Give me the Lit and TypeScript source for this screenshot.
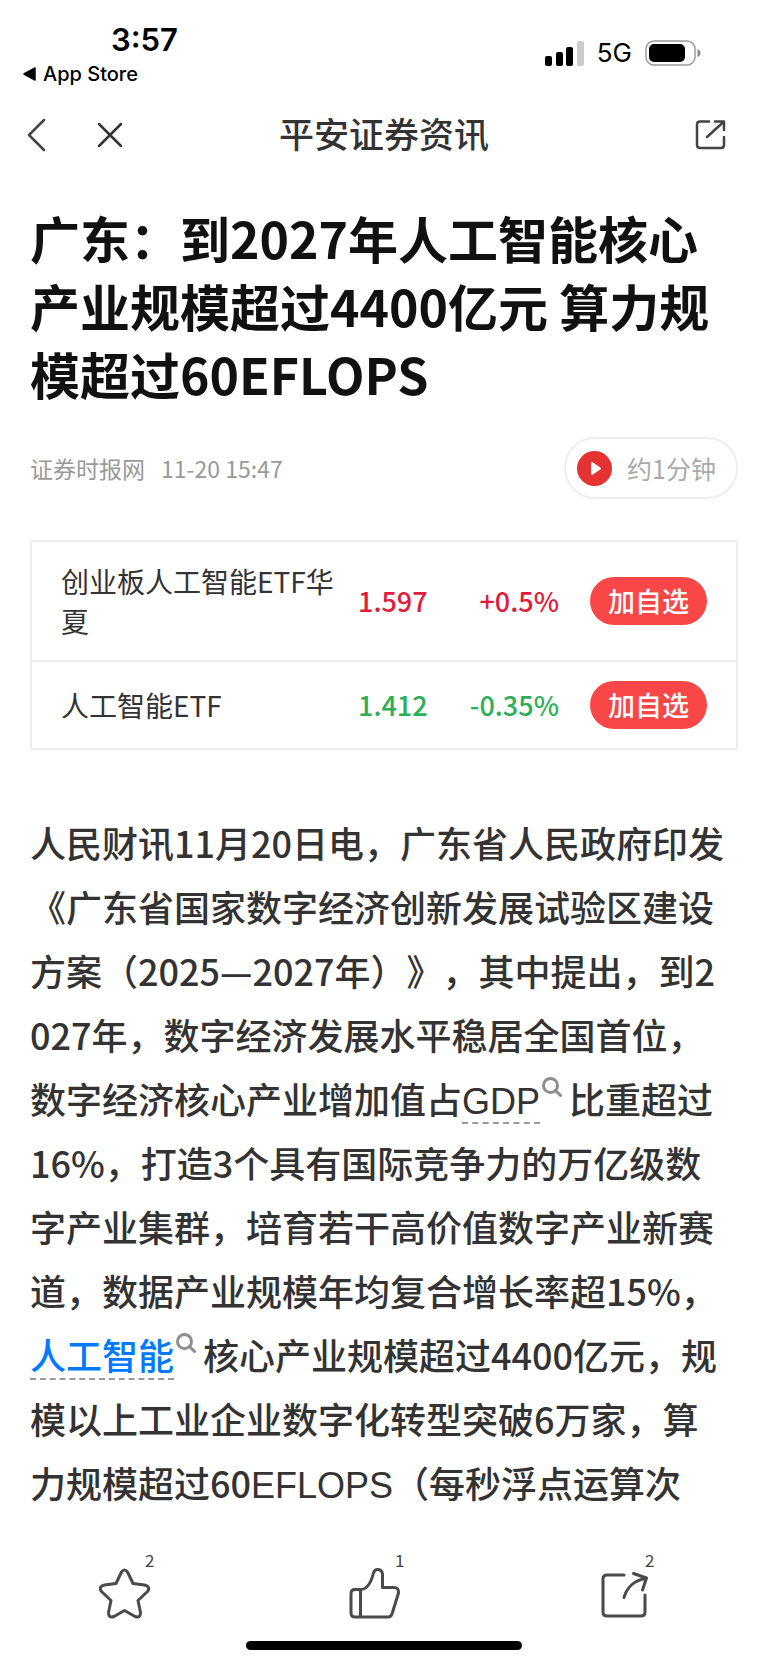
import { LitElement, html, css, svg } from "lit";
import { customElement, property } from "lit/decorators.js";
import { classMap } from "lit/directives/class-map.js";

const starIcon = svg`<path d="M22.500 4 Q25.500 0 28.500 4 L34 15.500 L45.500 17 Q52 18.500 48.500 23.500 L39 32.500 L41.500 44.500 Q41.500 50.500 36 48.500 L25.500 42.500 L15 48.500 Q9.500 50.500 9.500 44.500 L12 32.500 L2.500 23.500 Q-1 18.500 5.500 17 L17 15.500 Z"/>`;
const thumbIcon = svg`<path d="M11.500 21.500 H6 Q2 21.500 2 25.500 V45 Q2 49 6 49 H39 Q42 49 43 46 L49.500 25 Q50 19.500 45 19.500 H33.500 V6 Q33 1.500 28.500 1.500 Q25.500 1.500 24.500 5 C22.500 13 19 21.500 11.500 21.500 Z M11.500 21.500 V49"/>`;
const shareIcon = svg`<path d="M25 7 H8 Q4 7 4 11 V44 Q4 48 8 48 H42 Q46 48 46 44 V27"/><path d="M34.500 5.500 L47.500 10 L43.500 22 M47 10.500 C36 12 28 19 25 29.500"/>`;

interface Quote {
  name: string;
  price: string;
  change: string;
  up: boolean;
}

@customElement("status-bar")
export class StatusBar extends LitElement {
  static styles = css`
    :host {
      display: flex;
      justify-content: space-between;
      height: 92px;
      color: #000;
      font-family: Inter, "Liberation Sans", sans-serif;
    }
    .left {
      display: flex;
      flex-direction: column;
      padding: 20px 0 0 23px;
    }
    .time {
      padding-left: 88px;
      font-size: 31px;
      line-height: 40px;
      font-weight: 600;
    }
    .back {
      display: flex;
      align-items: center;
      gap: 7px;
      color: inherit;
      text-decoration: none;
      font-size: 20px;
      line-height: 28px;
      font-weight: 500;
    }
    .right {
      display: flex;
      align-items: center;
      gap: 13px;
      height: 40px;
      padding: 33px 67px 0 0;
    }
    .network {
      font-size: 26px;
      line-height: 32px;
    }
  `;

  render() {
    return html`
      <div class="left">
        <span class="time">3:57</span>
        <a class="back" href="#">
          <svg width="13" height="14" viewBox="0 0 13 14" aria-hidden="true">
            <path d="M1 7 L12 1 V13 Z" stroke="#000" stroke-width="1.500" stroke-linejoin="round" />
          </svg>
          App Store
        </a>
      </div>
      <div class="right">
        <svg width="39" height="25" viewBox="0 0 39 25" aria-hidden="true">
          <rect x="0" y="15" width="7" height="10" rx="2" />
          <rect x="11" y="11" width="7" height="14" rx="2" />
          <rect x="21" y="6" width="7" height="19" rx="2" />
          <rect x="32" y="0" width="7" height="25" rx="2" fill="#ccc" />
        </svg>
        <span class="network">5G</span>
        <svg width="56" height="26" viewBox="0 0 56 26" aria-hidden="true">
          <rect x="1" y="1" width="49" height="24" rx="8" fill="none" stroke="#9a9a9a" stroke-width="1.500" />
          <rect x="4" y="4" width="36" height="18" rx="5" />
          <path d="M52.500 9 Q55.500 10 55.500 13 Q55.500 16 52.500 17 Z" fill="#8a8a8a" />
        </svg>
      </div>
    `;
  }
}

@customElement("nav-bar")
export class NavBar extends LitElement {
  static styles = css`
    :host {
      display: grid;
      grid-template-columns: 1fr auto 1fr;
      align-items: center;
      height: 86px;
      padding: 0 25px;
      font-family: "Noto Sans CJK SC", sans-serif;
    }
    .group {
      display: flex;
      gap: 49px;
    }
    .end {
      justify-content: flex-end;
      padding-right: 16px;
    }
    button {
      display: flex;
      padding: 0;
      border: 0;
      background: none;
      cursor: pointer;
    }
    svg {
      fill: none;
      stroke: #444;
      stroke-width: 2.5;
      stroke-linecap: round;
      stroke-linejoin: round;
    }
    h2 {
      margin: 0 0 4px;
      color: #333;
      font-size: 35px;
      line-height: 50px;
      font-weight: 500;
    }
  `;

  render() {
    return html`
      <div class="group">
        <button aria-label="返回">
          <svg width="22" height="34" viewBox="0 0 22 34"><path d="M19 2 L4 17 L19 32" /></svg>
        </button>
        <button aria-label="关闭">
          <svg width="28" height="34" viewBox="0 0 28 34"><path d="M3 6 L25 28 M25 6 L3 28" stroke="#333" /></svg>
        </button>
      </div>
      <h2>平安证券资讯</h2>
      <div class="group end">
        <button aria-label="分享">
          <svg width="32" height="32" viewBox="0 0 32 32">
            <path d="M14 2.500 H5 Q2 2.500 2 5.500 V26 Q2 29 5 29 H26 Q29 29 29 26 V18" />
            <path d="M20 2.500 H29 V11 M28.500 3 L12 18" />
          </svg>
        </button>
      </div>
    `;
  }
}

@customElement("quote-table")
export class QuoteTable extends LitElement {
  @property({ attribute: false }) quotes: Quote[] = [];

  static styles = css`
    :host {
      display: block;
      border: 2px solid #eee;
      color: #333;
      font-size: 28px;
      line-height: 40px;
    }
    table {
      width: 100%;
      table-layout: fixed;
      border-collapse: collapse;
    }
    tr + tr {
      border-top: 2px solid #eee;
    }
    th,
    td {
      padding: 19px 0;
      font-weight: 400;
      text-align: left;
    }
    .name {
      padding-left: 29px;
      padding-right: 10px;
      word-break: break-all;
    }
    .price {
      width: 88px;
    }
    .change {
      width: 113px;
      text-align: right;
    }
    .price,
    .change {
      font-size: 27px;
      font-weight: 500;
    }
    .action {
      width: 148px;
      padding-right: 29px;
    }
    .up {
      color: #e21b3c;
    }
    .down {
      color: #2bae57;
    }
    button {
      display: block;
      width: 117px;
      height: 48px;
      margin-left: auto;
      padding: 0;
      border: 0;
      border-radius: 24px;
      background: #f94747;
      color: #fff;
      font-family: inherit;
      font-size: 27px;
      line-height: 40px;
      font-weight: 500;
      cursor: pointer;
    }
  `;

  render() {
    return html`
      <table>
        <tbody>
          ${this.quotes.map((q) => {
            const tone = { up: q.up, down: !q.up };
            return html`
              <tr>
                <th class="name" scope="row">${q.name}</th>
                <td class=${classMap({ price: true, ...tone })}>${q.price}</td>
                <td class=${classMap({ change: true, ...tone })}>${q.change}</td>
                <td class="action"><button>加自选</button></td>
              </tr>
            `;
          })}
        </tbody>
      </table>
    `;
  }
}

@customElement("action-bar")
export class ActionBar extends LitElement {
  static styles = css`
    :host {
      display: block;
      padding-top: 36px;
    }
    .actions {
      display: grid;
      grid-template-columns: repeat(3, 1fr);
      justify-items: center;
      padding-right: 18px;
    }
    button {
      position: relative;
      display: flex;
      padding: 18px 0 0;
      border: 0;
      background: none;
      color: #444;
      font-family: inherit;
      cursor: pointer;
    }
    svg {
      fill: none;
      stroke: #4a4a4a;
      stroke-width: 3;
      stroke-linecap: round;
      stroke-linejoin: round;
    }
    .count {
      position: absolute;
      top: 0;
      left: 46px;
      font-size: 17px;
      line-height: 20px;
    }
    .home {
      width: 36%;
      height: 9px;
      margin: 21px auto 15px;
      border-radius: 5px;
      background: #000;
    }
  `;

  render() {
    const items = [
      { label: "收藏", count: 2, icon: starIcon },
      { label: "点赞", count: 1, icon: thumbIcon },
      { label: "转发", count: 2, icon: shareIcon },
    ];
    return html`
      <div class="actions">
        ${items.map(
          (i) => html`
            <button aria-label=${i.label}>
              <svg width="52" height="52" viewBox="0 0 52 52">${i.icon}</svg>
              <span class="count">${i.count}</span>
            </button>
          `
        )}
      </div>
      <div class="home"></div>
    `;
  }
}

@customElement("app-root")
export class AppRoot extends LitElement {
  static styles = css`
    :host {
      display: block;
      background: #fff;
      font-family: "Noto Sans CJK SC", sans-serif;
      text-spacing-trim: space-all;
    }
    main {
      padding: 25px 30px 0;
    }
    h1 {
      margin: 0;
      color: #111;
      font-size: 50px;
      line-height: 68px;
      font-weight: 700;
      word-break: break-all;
    }
    .meta {
      display: flex;
      align-items: center;
      gap: 16px;
      margin: 30px 0 41px;
      color: #999;
      font-size: 23px;
      line-height: 34px;
    }
    .listen {
      display: flex;
      align-items: center;
      gap: 15px;
      height: 62px;
      margin-left: auto;
      padding: 0 20px 0 11px;
      border: 2px solid #eee;
      border-radius: 31px;
      background: #fff;
      color: #aaa;
      font-family: inherit;
      font-size: 25px;
      line-height: 36px;
      cursor: pointer;
    }
    .body {
      margin: 60px 0 0;
      padding-right: 8px;
      color: #333;
      font-size: 36px;
      line-height: 64px;
      font-weight: 500;
      word-break: break-all;
    }
    .term {
      color: inherit;
      text-decoration: underline dashed #999 2px;
      text-underline-offset: 8px;
      text-decoration-skip-ink: none;
    }
    .latin {
      font-family: "Liberation Sans", sans-serif;
      font-weight: 400;
      line-height: 1;
    }
    .hot {
      color: #007aff;
    }
    .lens {
      margin: 0 7px 0 2px;
      vertical-align: 17px;
      fill: none;
      stroke: #8e8e8e;
      stroke-width: 3;
      stroke-linecap: round;
    }
  `;

  private quotes: Quote[] = [
    { name: "创业板人工智能ETF华夏", price: "1.597", change: "+0.5%", up: true },
    { name: "人工智能ETF", price: "1.412", change: "-0.35%", up: false },
  ];

  private lens() {
    return html`<svg class="lens" width="20" height="20" viewBox="0 0 20 20" aria-hidden="true"><circle cx="8.500" cy="8.500" r="7" /><path d="M13.500 13.500 L18.500 18.500" /></svg>`;
  }

  render() {
    return html`
      <status-bar></status-bar>
      <nav-bar></nav-bar>
      <main>
        <h1>广东：到2027年人工智能核心产业规模超过4400亿元 算力规模超过60EFLOPS</h1>
        <div class="meta">
          <span>证券时报网</span>
          <time>11-20 15:47</time>
          <button class="listen">
            <svg width="35" height="35" viewBox="0 0 35 35" aria-hidden="true">
              <circle cx="17.500" cy="17.500" r="17.500" fill="#e53333" />
              <path d="M15 12 L23 17.500 L15 23 Z" fill="#fff" stroke="#fff" stroke-width="2" stroke-linejoin="round" />
            </svg>
            约1分钟
          </button>
        </div>
        <quote-table .quotes=${this.quotes}></quote-table>
        <p class="body">人民财讯11月20日电，广东省人民政府印发《广东省国家数字经济创新发展试验区建设方案（2025—2027年）》，其中提出，到2027年，数字经济发展水平稳居全国首位，数字经济核心产业增加值占<a class="term latin" href="#">GDP</a>${this.lens()}比重超过16%，打造3个具有国际竞争力的万亿级数字产业集群，培育若干高价值数字产业新赛道，数据产业规模年均复合增长率超15%，<a class="term hot" href="#">人工智能</a>${this.lens()}核心产业规模超过4400亿元，规模以上工业企业数字化转型突破6万家，算力规模超过60<span class="latin">EFLOPS</span>（每秒浮点运算次</p>
      </main>
      <action-bar></action-bar>
    `;
  }
}
